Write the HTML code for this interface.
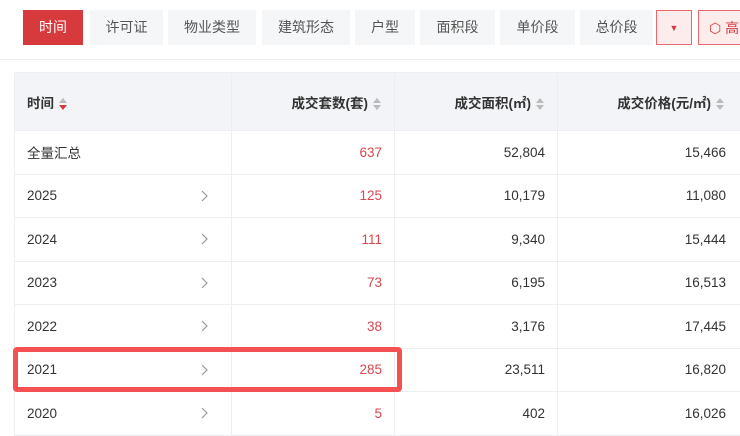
<!DOCTYPE html><html><head><meta charset="utf-8"><style>
body{margin:0;width:740px;height:436px;overflow:hidden;background:#fff;font-family:"Liberation Sans","Noto Sans CJK SC",sans-serif;position:relative}
.tab{position:absolute;top:10px;height:35px;line-height:35px;text-align:center;background:#f5f6f8;color:#555;font-size:14px}
.sep{position:absolute;left:0;right:0;top:59px;height:1px;background:#eceef2}
table{position:absolute;left:14px;top:72px;border-collapse:collapse;table-layout:fixed;width:743px;font-size:13.5px;color:#333}
td,th{border:1px solid #eceef2;padding:0 12px;box-sizing:border-box}
tr{height:43.5px}
tr.h{height:58px}
th{background:#f3f4f7;font-weight:bold;font-size:13.5px;color:#333}
.r{text-align:right}.red{color:#d9474f}
.s{display:inline-block;width:10px;vertical-align:middle;margin-left:4px}
td:first-child{position:relative}
.chev{position:absolute;left:186px;top:50%;margin-top:-6px}
td.p{padding-right:31px}
</style></head><body>
<div class="tab" style="left:23px;width:60px;background:#d63a3d;color:#fff">时间</div>
<div class="tab" style="left:90px;width:73px">许可证</div>
<div class="tab" style="left:168px;width:88px">物业类型</div>
<div class="tab" style="left:262px;width:88px">建筑形态</div>
<div class="tab" style="left:355px;width:60px">户型</div>
<div class="tab" style="left:420px;width:75px">面积段</div>
<div class="tab" style="left:500px;width:75px">单价段</div>
<div class="tab" style="left:580px;width:73px">总价段</div>
<div class="tab" style="left:656px;width:34px;height:33px;background:#fdecec;border:1px solid #e8696b;color:#d63a3d;font-size:9px">▼</div>
<div class="tab" style="left:698px;width:60px;height:33px;background:#fdecec;border:1px solid #e8696b;color:#d63a3d;text-align:left;padding-left:10px">⬡ 高</div>
<div class="sep"></div>
<table>
<colgroup><col style="width:217px"><col style="width:163px"><col style="width:163px"><col style="width:200px"></colgroup>
<tr class="h"><th style="text-align:left">时间<svg class="s" viewBox="0 0 10 14" height="14"><path d="M1 6L5 1L9 6Z" fill="#bbb"/><path d="M1 8L5 13L9 8Z" fill="#d63a3d"/></svg></th>
<th class="r">成交套数(套)<svg class="s" viewBox="0 0 10 14" height="14"><path d="M1 6L5 1L9 6Z" fill="#bbb"/><path d="M1 8L5 13L9 8Z" fill="#bbb"/></svg></th>
<th class="r">成交面积(㎡)<svg class="s" viewBox="0 0 10 14" height="14"><path d="M1 6L5 1L9 6Z" fill="#bbb"/><path d="M1 8L5 13L9 8Z" fill="#bbb"/></svg></th>
<th class="r" style="padding-right:32px">成交价格(元/㎡)<svg class="s" viewBox="0 0 10 14" height="14"><path d="M1 6L5 1L9 6Z" fill="#bbb"/><path d="M1 8L5 13L9 8Z" fill="#bbb"/></svg></th></tr>
<tr><td>全量汇总</td><td class="r red">637</td><td class="r">52,804</td><td class="r p">15,466</td></tr>
<tr><td>2025<svg class="chev" width="7" height="12" viewBox="0 0 7 12"><path d="M1 1L6 6L1 11" fill="none" stroke="#999" stroke-width="1.2"/></svg></td><td class="r red">125</td><td class="r">10,179</td><td class="r p">11,080</td></tr>
<tr><td>2024<svg class="chev" width="7" height="12" viewBox="0 0 7 12"><path d="M1 1L6 6L1 11" fill="none" stroke="#999" stroke-width="1.2"/></svg></td><td class="r red">111</td><td class="r">9,340</td><td class="r p">15,444</td></tr>
<tr><td>2023<svg class="chev" width="7" height="12" viewBox="0 0 7 12"><path d="M1 1L6 6L1 11" fill="none" stroke="#999" stroke-width="1.2"/></svg></td><td class="r red">73</td><td class="r">6,195</td><td class="r p">16,513</td></tr>
<tr><td>2022<svg class="chev" width="7" height="12" viewBox="0 0 7 12"><path d="M1 1L6 6L1 11" fill="none" stroke="#999" stroke-width="1.2"/></svg></td><td class="r red">38</td><td class="r">3,176</td><td class="r p">17,445</td></tr>
<tr><td>2021<svg class="chev" width="7" height="12" viewBox="0 0 7 12"><path d="M1 1L6 6L1 11" fill="none" stroke="#999" stroke-width="1.2"/></svg></td><td class="r red">285</td><td class="r">23,511</td><td class="r p">16,820</td></tr>
<tr><td>2020<svg class="chev" width="7" height="12" viewBox="0 0 7 12"><path d="M1 1L6 6L1 11" fill="none" stroke="#999" stroke-width="1.2"/></svg></td><td class="r red">5</td><td class="r">402</td><td class="r p">16,026</td></tr>
</table>
<div style="position:absolute;left:13px;top:347px;width:379px;height:35px;border:5px solid #f55152;border-radius:4px"></div>
</body></html>
